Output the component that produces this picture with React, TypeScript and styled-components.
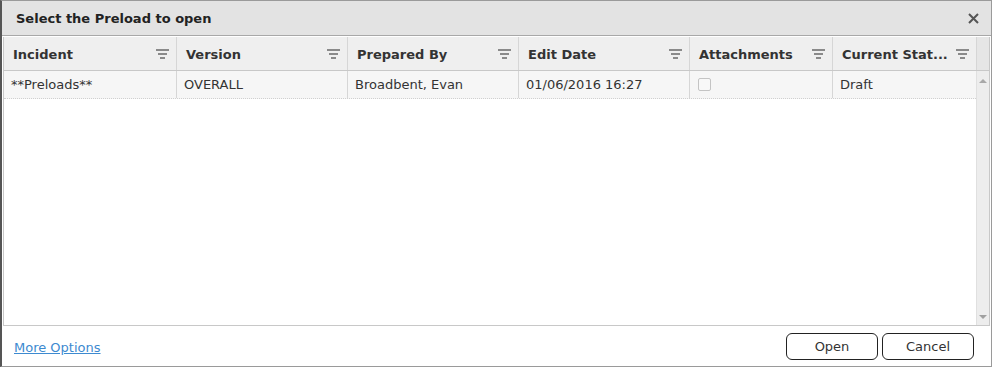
import { createGlobalStyle } from "styled-components";
import styled from "styled-components";

const columns = [
  { title: "Incident", width: 173 },
  { title: "Version", width: 171 },
  { title: "Prepared By", width: 171 },
  { title: "Edit Date", width: 171 },
  { title: "Attachments", width: 143 },
  { title: "Current Stat...", width: 143 },
];

const rows = [
  {
    incident: "**Preloads**",
    version: "OVERALL",
    preparedBy: "Broadbent, Evan",
    editDate: "01/06/2016 16:27",
    attachments: false,
    status: "Draft",
  },
];

function FilterIcon() {
  return (
    <svg width="13" height="10" viewBox="0 0 13 10">
      <rect x="0" y="0" width="13" height="2" fill="#8a8a8a" />
      <rect x="2" y="4" width="9" height="2" fill="#8a8a8a" />
      <rect x="4" y="8" width="5" height="2" fill="#8a8a8a" />
    </svg>
  );
}

function App() {
  return (
    <>
      <GlobalStyle />
      <Dialog>
        <TitleBar>
          <Title>Select the Preload to open</Title>
          <CloseBtn aria-label="close">
            <svg width="11" height="11" viewBox="0 0 11 11">
              <path d="M1 1L10 10M10 1L1 10" stroke="#555" strokeWidth="2" />
            </svg>
          </CloseBtn>
        </TitleBar>
        <Grid>
          <HeaderRow>
            {columns.map((col, i) => (
              <HeaderCell key={col.title} width={col.width} last={i === columns.length - 1}>
                <span>{col.title}</span>
                <FilterIcon />
              </HeaderCell>
            ))}
            <HeaderGap />
          </HeaderRow>
          <Body>
            <Rows>
              {rows.map((row) => (
                <Row key={row.incident}>
                  <Cell width={173}>{row.incident}</Cell>
                  <Cell width={171}>{row.version}</Cell>
                  <Cell width={171}>{row.preparedBy}</Cell>
                  <Cell width={171}>{row.editDate}</Cell>
                  <Cell width={143}>
                    <Check />
                  </Cell>
                  <Cell width={143} last>
                    {row.status}
                  </Cell>
                </Row>
              ))}
            </Rows>
            <Scrollbar>
              <ArrowUp />
              <ArrowDown />
            </Scrollbar>
          </Body>
        </Grid>
        <Footer>
          <MoreLink href="#">More Options</MoreLink>
          <Buttons>
            <Button>Open</Button>
            <Button>Cancel</Button>
          </Buttons>
        </Footer>
      </Dialog>
    </>
  );
}

const GlobalStyle = createGlobalStyle`
  html, body {
    margin: 0;
    padding: 0;
    background: #fff;
  }
  body {
    font-family: "DejaVu Sans", Verdana, sans-serif;
    font-size: 13px;
    color: #333;
  }
`;

const Dialog = styled.div`
  width: 992px;
  height: 367px;
  box-sizing: border-box;
  border: 1px solid #9a9a9a;
  border-left: 2px solid #555;
  background: #fff;
  display: flex;
  flex-direction: column;
`;

const TitleBar = styled.div`
  height: 35px;
  flex-shrink: 0;
  box-sizing: border-box;
  display: flex;
  align-items: center;
  justify-content: space-between;
  padding: 1px 12px 0 14px;
  background: #e3e3e3;
  border-bottom: 1px solid #a8a8a8;
`;

const Title = styled.div`
  font-weight: bold;
  font-size: 13px;
  color: #222;
`;

const CloseBtn = styled.button`
  border: none;
  background: none;
  padding: 0;
  display: flex;
  cursor: pointer;
`;

const Grid = styled.div`
  flex: 1;
  margin: 1px 1px 0 1px;
  border: 1px solid #c8c8c8;
  border-top: none;
  display: flex;
  flex-direction: column;
  min-height: 0;
`;

const HeaderRow = styled.div`
  display: flex;
  height: 34px;
  flex-shrink: 0;
  box-sizing: border-box;
  background: #efefef;
  border-bottom: 1px solid #c8c8c8;
`;

const HeaderCell = styled.div<{ width: number; last?: boolean }>`
  width: ${(p) => p.width}px;
  box-sizing: border-box;
  display: flex;
  align-items: center;
  justify-content: space-between;
  padding: 1px 7px 0 9px;
  font-weight: bold;
  font-size: 13px;
  color: #333;
  white-space: nowrap;
  border-right: ${(p) => (p.last ? "none" : "1px solid #d6d6d6")};
`;

const HeaderGap = styled.div`
  flex: 1;
  background: #e6e6e6;
  border-left: 1px solid #d6d6d6;
`;

const Body = styled.div`
  flex: 1;
  display: flex;
  min-height: 0;
`;

const Rows = styled.div`
  flex: 1;
  background: #fff;
`;

const Row = styled.div`
  display: flex;
  height: 28px;
  box-sizing: border-box;
  background: #f6f6f6;
  border-bottom: 1px dotted #d0d0d0;
`;

const Cell = styled.div<{ width: number; last?: boolean }>`
  width: ${(p) => p.width}px;
  box-sizing: border-box;
  display: flex;
  align-items: center;
  padding: 0 6px 0 7px;
  font-size: 13px;
  color: #333;
  white-space: nowrap;
  border-right: ${(p) => (p.last ? "none" : "1px solid #d6d6d6")};
`;

const Check = styled.div`
  width: 11px;
  height: 11px;
  margin-left: 1px;
  border: 1px solid #c4c4c4;
  border-radius: 2px;
  background: #f8f8f8;
`;

const Scrollbar = styled.div`
  width: 15px;
  background: #ededed;
  border-left: 1px solid #e0e0e0;
  display: flex;
  flex-direction: column;
  justify-content: space-between;
  align-items: center;
  padding: 8px 0 6px;
  box-sizing: border-box;
`;

const ArrowUp = styled.div`
  width: 0;
  height: 0;
  border-left: 4px solid transparent;
  border-right: 4px solid transparent;
  border-bottom: 4px solid #a8a8a8;
`;

const ArrowDown = styled.div`
  width: 0;
  height: 0;
  border-left: 4px solid transparent;
  border-right: 4px solid transparent;
  border-top: 4px solid #a0a0a0;
`;

const Footer = styled.div`
  height: 40px;
  flex-shrink: 0;
  display: flex;
  align-items: center;
  justify-content: space-between;
  padding: 0 17px 0 12px;
`;

const MoreLink = styled.a`
  color: #3d8ad0;
  font-size: 13px;
  text-decoration: underline;
  margin-top: 2px;
`;

const Buttons = styled.div`
  display: flex;
  gap: 4px;
`;

const Button = styled.button`
  width: 92px;
  height: 27px;
  background: #fff;
  border: 1px solid #222;
  border-radius: 6px;
  font-family: "DejaVu Sans", Verdana, sans-serif;
  font-size: 13px;
  color: #333;
  cursor: pointer;
`;

export default App;
